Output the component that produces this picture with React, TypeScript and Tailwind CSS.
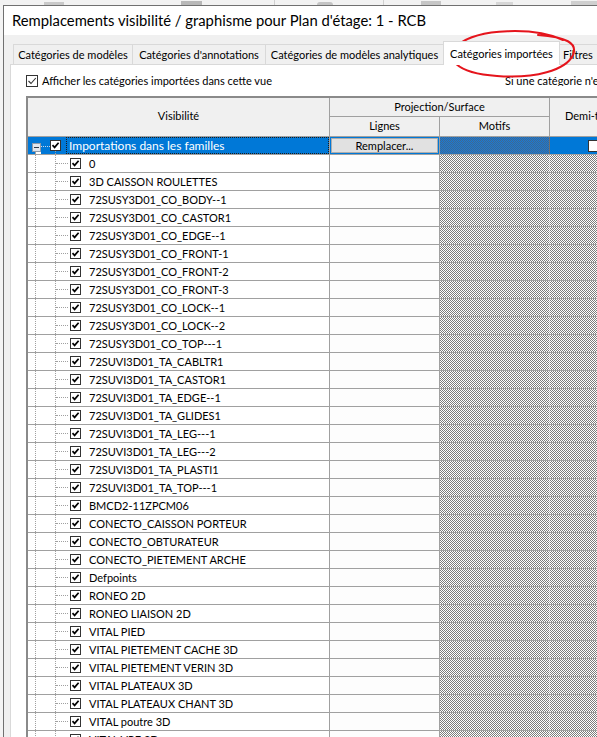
import React from "react";

const children = [
  "0",
  "3D CAISSON ROULETTES",
  "72SUSY3D01_CO_BODY--1",
  "72SUSY3D01_CO_CASTOR1",
  "72SUSY3D01_CO_EDGE--1",
  "72SUSY3D01_CO_FRONT-1",
  "72SUSY3D01_CO_FRONT-2",
  "72SUSY3D01_CO_FRONT-3",
  "72SUSY3D01_CO_LOCK--1",
  "72SUSY3D01_CO_LOCK--2",
  "72SUSY3D01_CO_TOP---1",
  "72SUVI3D01_TA_CABLTR1",
  "72SUVI3D01_TA_CASTOR1",
  "72SUVI3D01_TA_EDGE--1",
  "72SUVI3D01_TA_GLIDES1",
  "72SUVI3D01_TA_LEG---1",
  "72SUVI3D01_TA_LEG---2",
  "72SUVI3D01_TA_PLASTI1",
  "72SUVI3D01_TA_TOP---1",
  "BMCD2-11ZPCM06",
  "CONECTO_CAISSON PORTEUR",
  "CONECTO_OBTURATEUR",
  "CONECTO_PIETEMENT ARCHE",
  "Defpoints",
  "RONEO 2D",
  "RONEO LIAISON 2D",
  "VITAL PIED",
  "VITAL PIETEMENT CACHE 3D",
  "VITAL PIETEMENT VERIN 3D",
  "VITAL PLATEAUX 3D",
  "VITAL PLATEAUX CHANT 3D",
  "VITAL poutre 3D",
  "VITAL VRE 3D",
];

const tabs = [
  { label: "Catégories de modèles", w: "w-[119px]" },
  { label: "Catégories d'annotations", w: "w-[133px]" },
  { label: "Catégories de modèles analytiques", w: "w-[178px]" },
];

const hatch =
  "bg-[repeating-conic-gradient(#7c7c7c_0_25%,#ffffff_0_50%)] bg-[length:2px_2px]";

function CheckBox() {
  return (
    <span className="flex h-[11px] w-[11px] shrink-0 items-center justify-center border border-[#333333] bg-white">
      <svg viewBox="0 0 9 9" className="h-[9px] w-[9px]">
        <path d="M1.5 4.2 L3.6 6.4 L7.6 1.8" stroke="#000" strokeWidth="1.7" fill="none" />
      </svg>
    </span>
  );
}

function ChildRow({ label }: { label: string }) {
  return (
    <div className="flex h-[18px] border-b border-[#a0a0a0]">
      {/* Visibilité */}
      <div className="flex w-[302px] shrink-0 items-stretch border-r border-[#a0a0a0] bg-white">
        <div className="w-[7px]" />
        <div className="w-[20px] border-l border-dotted border-[#a0a0a0]" />
        <div className="flex w-[13px] items-center border-l border-dotted border-[#a0a0a0]">
          <div className="w-full border-t border-dotted border-[#a0a0a0]" />
        </div>
        <div className="flex items-center gap-[8px] pl-[2px] whitespace-nowrap">
          <CheckBox />
          <span>{label}</span>
        </div>
      </div>
      {/* Lignes */}
      <div className="w-[110px] shrink-0 border-r border-[#a0a0a0] bg-[#fdfdfd]" />
      {/* Motifs */}
      <div className={`w-[110px] shrink-0 border-r border-dotted border-[#b0b0b0] ${hatch}`} />
      {/* Demi-teinte */}
      <div className={`flex-1 ${hatch}`} />
    </div>
  );
}

function RootRow() {
  return (
    <div className="flex h-[18px] border-b border-[#a0a0a0]">
      <div className="flex w-[302px] shrink-0 items-stretch border-r border-[#a0a0a0] bg-[#0078d7]">
        <div className="w-[4px]" />
        <div className="flex w-[9px] flex-col">
          <div className="h-[6px]" />
          <div className="flex h-[9px] items-center justify-center border border-[#8e9aa8] bg-[#dfe6ee]">
            <div className="h-px w-[5px] bg-[#2b3a4a]" />
          </div>
          <div className="ml-[3px] flex-1 border-l border-dotted border-[#a0a0a0] bg-white" />
        </div>
        <div className="flex w-[9px] flex-col">
          <div className="h-[9px]" />
          <div className="border-t border-dotted border-[#c8d6e6]" />
        </div>
        <div className="flex w-[11px] flex-col">
          <div className="h-[3px]" />
          <CheckBox />
          <div className="ml-[5px] flex-1 border-l border-dotted border-[#a0a0a0]" />
        </div>
        <div className="ml-[5px] flex flex-1 items-center border border-dotted border-[#1b1b1b] pl-[2px] text-[12px] text-white">
          Importations dans les familles
        </div>
      </div>
      <div className="flex w-[110px] shrink-0 items-center justify-center border-r border-[#a0a0a0] bg-[#0078d7] px-[1px]">
        <div className="flex h-[15px] w-full items-center justify-center border border-[#adadad] bg-[#e1e1e1] text-black">
          Remplacer...
        </div>
      </div>
      <div className="w-[110px] shrink-0 border-r border-[#707070] bg-[repeating-conic-gradient(#3f6890_0_25%,#1a7ad6_0_50%)] bg-[length:2px_2px]" />
      <div className="flex flex-1 items-center bg-[#0078d7] pl-[38px]">
        <span className="h-[12px] w-[14px] border border-[#333333] bg-white" />
      </div>
    </div>
  );
}

export default function App() {
  return (
    <div className="relative h-[737px] w-[597px] overflow-hidden bg-[#f4f4f4] font-['Lato','Open_Sans',sans-serif] text-[11px] leading-none text-black">
      {/* window behind */}
      <div className="flex h-[5px] items-end bg-[#f2f2f2]">
        <div className="ml-[44px] h-[3px] w-[22px] bg-[#c9c9c9]" />
        <div className="ml-[117px] h-[4px] w-[22px] bg-[#b8b8b8]" />
        <div className="ml-[72px] h-[5px] w-px bg-[#d0d0d0]" />
        <div className="ml-[42px] h-[3px] w-[18px] rounded-t-full bg-[#c4c4c4]" />
        <div className="ml-[50px] h-[5px] w-px bg-[#d0d0d0]" />
        <div className="ml-[37px] h-[4px] w-[22px] bg-[#c6c6c6]" />
        <div className="ml-[55px] h-[3px] w-[18px] bg-[#d6d6d6]" />
        <div className="ml-[58px] h-[4px] w-[28px] bg-[#cfcfcf]" />
      </div>

      <div className="ml-[3px] flex h-[732px] flex-col border-l border-t border-[#707070] bg-[#f0f0f0]">
        {/* Title bar */}
        <div className="flex h-[29px] shrink-0 items-center bg-white pl-[8px] text-[14.8px] whitespace-nowrap">
          Remplacements visibilité / graphisme pour Plan d'étage: 1 - RCB
        </div>

        {/* Tabs */}
        <div className="mt-[6px] flex h-[23px] shrink-0 items-end pl-[9px] whitespace-nowrap">
          {tabs.map((t) => (
            <div
              key={t.label}
              className={`flex h-[20px] ${t.w} shrink-0 items-center justify-center border-l border-t border-[#d9d9d9] bg-[#f0f0f0]`}
            >
              {t.label}
            </div>
          ))}
          <div className="relative z-10 -mb-px flex h-[24px] w-[117px] shrink-0 items-center justify-center border-x border-t border-[#d9d9d9] bg-white">
            Catégories importées
          </div>
          <div className="flex h-[20px] w-[60px] shrink-0 items-center border-t border-[#d9d9d9] bg-[#f0f0f0] pl-[3px]">
            Filtres
          </div>
        </div>

        {/* Tab page */}
        <div className="ml-[6px] flex flex-1 flex-col border-l border-t border-[#d9d9d9] bg-white pl-[15px]">
          <div className="flex h-[31px] shrink-0 items-center whitespace-nowrap">
            <span className="flex h-[12px] w-[12px] items-center justify-center border border-[#333333] bg-white">
              <svg viewBox="0 0 10 10" className="h-[10px] w-[10px]">
                <path d="M1.5 5 L4 7.5 L8.8 2" stroke="#333" strokeWidth="1.1" fill="none" />
              </svg>
            </span>
            <span className="ml-[4px]">Afficher les catégories importées dans cette vue</span>
            <span className="ml-auto w-[92px] shrink-0 overflow-hidden">
              Si une catégorie n'est pas visible
            </span>
          </div>

          {/* Grid */}
          <div className="flex flex-1 flex-col border-l-2 border-t-2 border-[#8a8a8a]">
            {/* Header */}
            <div className="flex h-[39px] shrink-0 border-b border-[#a0a0a0] bg-[#f0f0f0]">
              <div className="flex w-[302px] shrink-0 items-center justify-center border-r border-[#a0a0a0] pb-[3px]">
                Visibilité
              </div>
              <div className="flex w-[220px] shrink-0 flex-col border-r border-[#a0a0a0]">
                <div className="flex h-[19px] items-center justify-center border-b border-[#a0a0a0] pb-[2px]">
                  Projection/Surface
                </div>
                <div className="flex flex-1">
                  <div className="flex w-[110px] items-center justify-center border-r border-[#a0a0a0] pb-[2px]">
                    Lignes
                  </div>
                  <div className="flex flex-1 items-center justify-center pb-[2px]">Motifs</div>
                </div>
              </div>
              <div className="flex flex-1 items-center overflow-hidden pb-[3px] pl-[15px] whitespace-nowrap">
                Demi-teinte
              </div>
            </div>

            {/* Rows */}
            <div className="flex-1 overflow-hidden">
              <RootRow />
              {children.map((c) => (
                <ChildRow key={c} label={c} />
              ))}
            </div>
          </div>
        </div>
      </div>

      {/* red hand-drawn annotation */}
      <svg className="pointer-events-none absolute left-0 top-0" width="597" height="737">
        <path
          d="M563 40 C535 27 478 28 458 45 C444 58 455 73 497 76 C535 79 566 70 573 55 C578 43 566 37 538 35"
          stroke="#e5141c"
          strokeWidth="2"
          fill="none"
          strokeLinecap="round"
        />
      </svg>
    </div>
  );
}
